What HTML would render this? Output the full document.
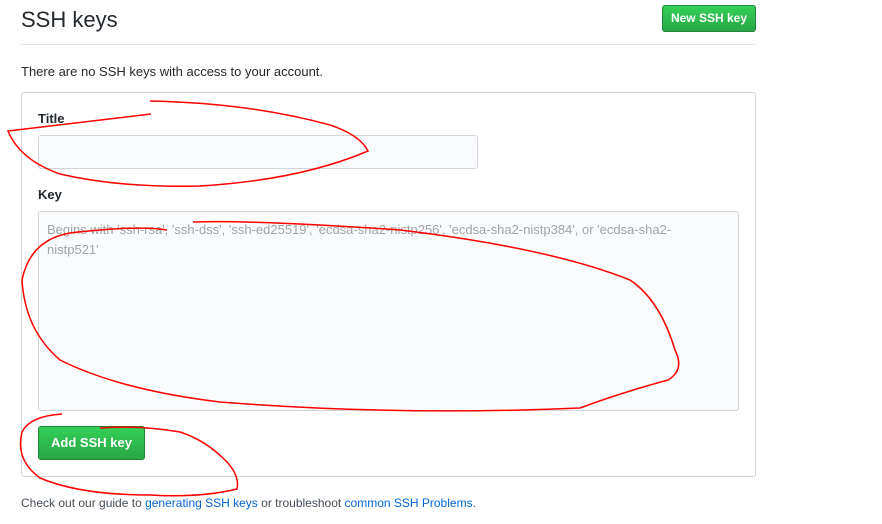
<!DOCTYPE html>
<html><head><style>
body{margin:0;width:882px;height:524px;background:#fff;font-family:"Liberation Sans",Arial,sans-serif;color:#24292e;position:relative;overflow:hidden}
.a{position:absolute}
h1{position:absolute;left:21px;top:4px;margin:0;font-size:22px;font-weight:normal;line-height:32px}
.btn{position:absolute;background:linear-gradient(#34d058,#28a745);border:1px solid #22863a;border-radius:3px;color:#fff;font-weight:bold;box-sizing:border-box;text-align:center}
a{color:#0366d6;text-decoration:none}
</style></head><body>
<h1>SSH keys</h1>
<div class="btn" style="left:662px;top:5px;width:94px;height:27px;font-size:12px;line-height:25px">New SSH key</div>
<div class="a" style="left:21px;top:44px;width:735px;height:1px;background:#e1e4e8"></div>
<div class="a" style="left:21px;top:64px;font-size:13px">There are no SSH keys with access to your account.</div>
<div class="a" style="left:21px;top:92px;width:735px;height:385px;border:1px solid #d1d5da;border-radius:3px;box-sizing:border-box"></div>
<div class="a" style="left:38px;top:111px;font-size:13px;font-weight:bold">Title</div>
<div class="a" style="left:38px;top:135px;width:440px;height:34px;border:1px solid #d1d5da;border-radius:3px;background:#fafbfc;box-sizing:border-box"></div>
<div class="a" style="left:38px;top:187px;font-size:13px;font-weight:bold">Key</div>
<div class="a" style="left:38px;top:211px;width:701px;height:200px;border:1px solid #d1d5da;border-radius:3px;background:#fafbfc;box-sizing:border-box;padding:8px;font-size:13px;line-height:20px;color:#a0a4a8;white-space:nowrap">Begins with 'ssh-rsa', 'ssh-dss', 'ssh-ed25519', 'ecdsa-sha2-nistp256', 'ecdsa-sha2-nistp384', or 'ecdsa-sha2-<br>nistp521'</div>
<div class="btn" style="left:38px;top:426px;width:107px;height:34px;font-size:13px;line-height:32px">Add SSH key</div>
<div class="a" style="left:21px;top:496px;font-size:12px;color:#444d56">Check out our guide to <a>generating SSH keys</a> or troubleshoot <a>common SSH Problems</a>.</div>
<svg class="a" style="left:0;top:0" width="882" height="524">
<g fill="none" stroke="#f00" stroke-width="1.5">
<path d="M151 114 L8 131 Q20 160 60 174 Q120 188 200 186 Q300 180 368 151 Q360 135 330 125 Q250 103 150 101"/>
<path d="M167 230 Q140 225 70 233 Q30 240 22 280 Q25 330 60 360 Q120 390 220 402 Q400 416 580 408 Q620 393 668 380 Q685 370 675 350 Q660 300 630 280 Q550 248 400 230 Q260 220 193 222"/>
<path d="M62 414 Q30 416 22 432 Q15 460 40 478 Q80 495 150 495 Q200 498 237 489 Q240 475 225 460 Q205 440 180 432 Q140 425 100 428"/>
</g></svg>
</body></html>
